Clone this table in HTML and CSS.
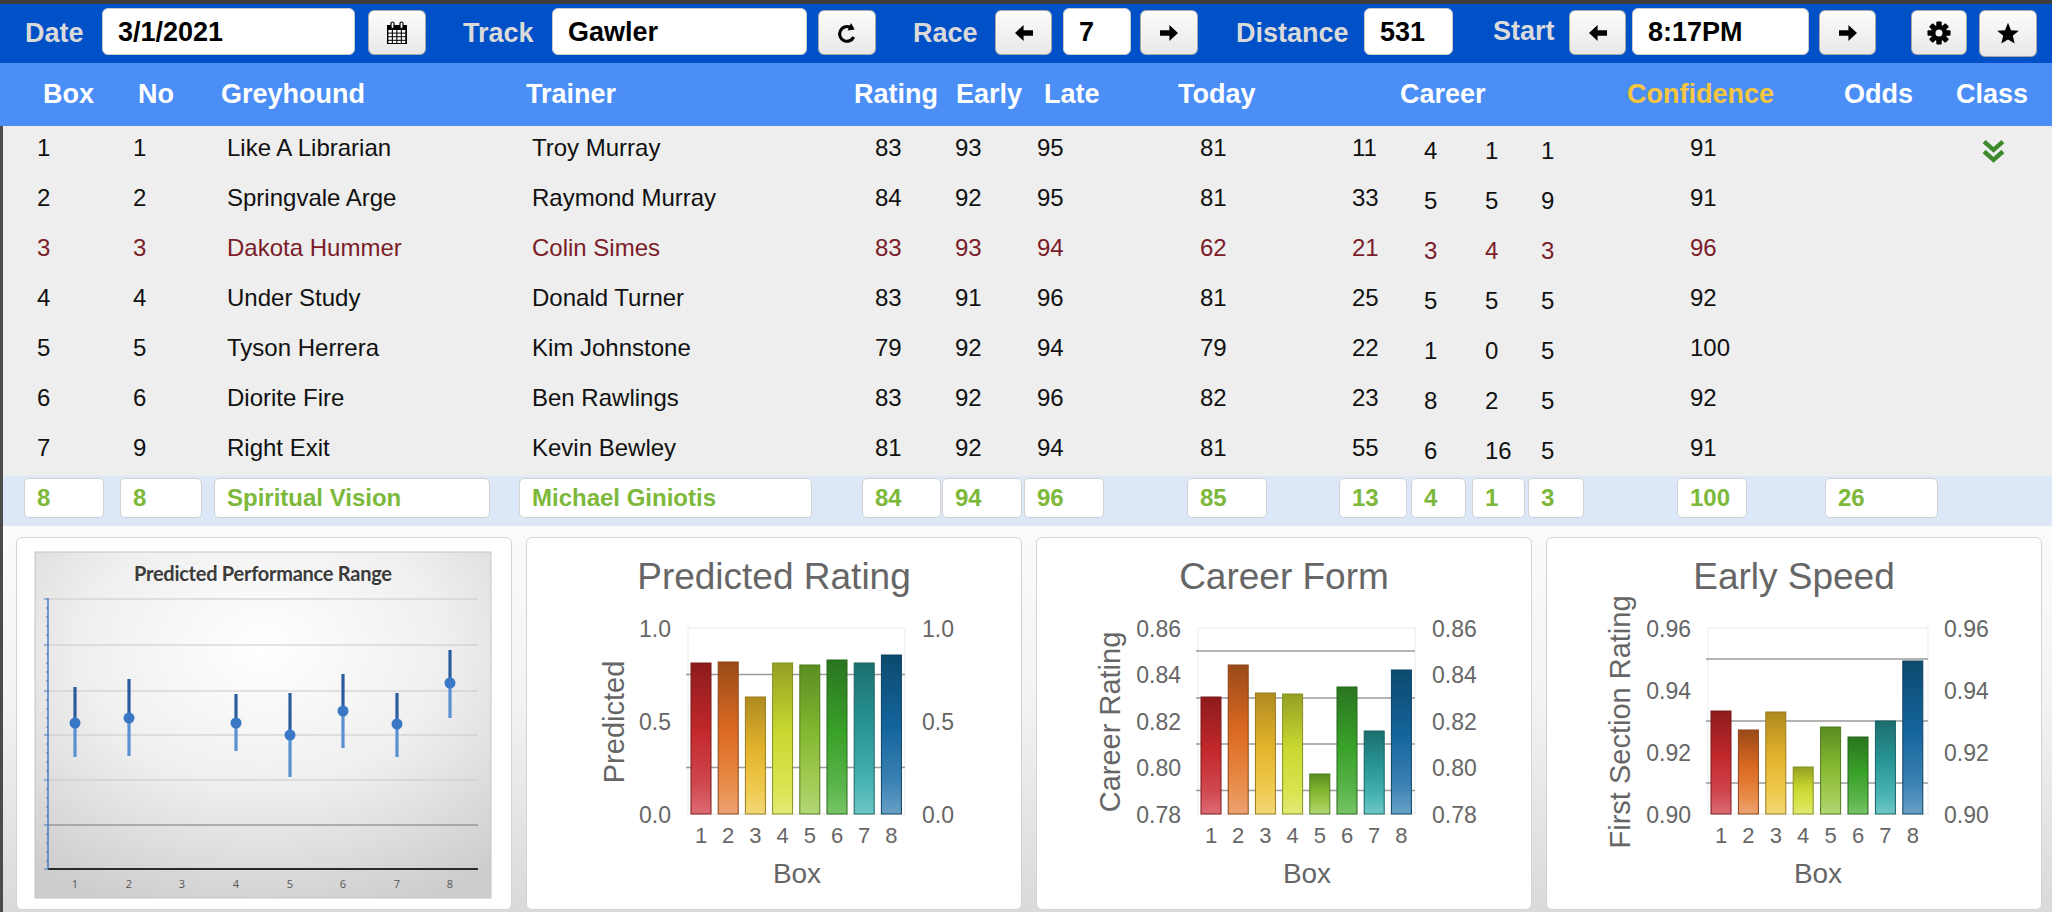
FILE: index.html
```html
<!DOCTYPE html>
<html>
<head>
<meta charset="utf-8">
<title>Race</title>
<link rel="stylesheet" href="styles.css">
</head>
<body>
<div class="app">
  <div class="toolbar">
    <div class="tb-label lb-date">Date</div>
    <div class="tb-input in-date">3/1/2021</div>
    <div class="tb-btn bt-cal">
      <svg width="22" height="24" viewBox="0 0 22 24">
        <rect x="1" y="4" width="20" height="19" fill="#000"/>
        <g fill="#fff">
          <rect x="2.4" y="9" width="3.4" height="2.6"/><rect x="6.9" y="9" width="3.4" height="2.6"/><rect x="11.4" y="9" width="3.4" height="2.6"/><rect x="15.9" y="9" width="3.4" height="2.6"/>
          <rect x="2.4" y="12.6" width="3.4" height="2.6"/><rect x="6.9" y="12.6" width="3.4" height="2.6"/><rect x="11.4" y="12.6" width="3.4" height="2.6"/><rect x="15.9" y="12.6" width="3.4" height="2.6"/>
          <rect x="2.4" y="16.2" width="3.4" height="2.6"/><rect x="6.9" y="16.2" width="3.4" height="2.6"/><rect x="11.4" y="16.2" width="3.4" height="2.6"/><rect x="15.9" y="16.2" width="3.4" height="2.6"/>
          <rect x="2.4" y="19.8" width="3.4" height="2.2"/><rect x="6.9" y="19.8" width="3.4" height="2.2"/><rect x="11.4" y="19.8" width="3.4" height="2.2"/><rect x="15.9" y="19.8" width="3.4" height="2.2"/>
        </g>
        <rect x="5" y="1" width="3" height="6.5" rx="1.5" fill="#fff" stroke="#000" stroke-width="1.2"/>
        <rect x="14" y="1" width="3" height="6.5" rx="1.5" fill="#fff" stroke="#000" stroke-width="1.2"/>
      </svg>
    </div>
    <div class="tb-label lb-track">Track</div>
    <div class="tb-input in-track">Gawler</div>
    <div class="tb-btn bt-refresh">
      <svg width="22" height="24" viewBox="0 0 24 24">
        <path d="M19.25 16.4 A8 8 0 1 1 15.4 5.75" fill="none" stroke="#000" stroke-width="3.4"/>
        <polygon points="16.4,1.2 20.4,8.1 12.6,9.4" fill="#000"/>
      </svg>
    </div>
    <div class="tb-label lb-race">Race</div>
    <div class="tb-btn bt-arrow">
      <svg width="20" height="20" viewBox="0 0 20 20"><path d="M19 7.3H9.6V2L1 10l8.6 8v-5.3H19z" fill="#000"/></svg>
    </div>
    <div class="tb-input in-race">7</div>
    <div class="tb-btn bt-arrow bt-race-next">
      <svg width="20" height="20" viewBox="0 0 20 20"><path d="M1 7.3h9.4V2l8.6 8-8.6 8v-5.3H1z" fill="#000"/></svg>
    </div>
    <div class="tb-label lb-dist">Distance</div>
    <div class="tb-input in-dist">531</div>
    <div class="tb-label lb-start">Start</div>
    <div class="tb-btn bt-arrow">
      <svg width="20" height="20" viewBox="0 0 20 20"><path d="M19 7.3H9.6V2L1 10l8.6 8v-5.3H19z" fill="#000"/></svg>
    </div>
    <div class="tb-input in-time">8:17PM</div>
    <div class="tb-btn bt-arrow bt-time-next">
      <svg width="20" height="20" viewBox="0 0 20 20"><path d="M1 7.3h9.4V2l8.6 8-8.6 8v-5.3H1z" fill="#000"/></svg>
    </div>
    <div class="tb-btn bt-gear">
      <svg width="24" height="24" viewBox="-12 -12 24 24">
        <g fill="#000">
          <circle r="8"/>
          <rect x="-2.7" y="-11.5" width="5.4" height="23" rx="1"/>
          <rect x="-2.7" y="-11.5" width="5.4" height="23" rx="1" transform="rotate(45)"/>
          <rect x="-2.7" y="-11.5" width="5.4" height="23" rx="1" transform="rotate(90)"/>
          <rect x="-2.7" y="-11.5" width="5.4" height="23" rx="1" transform="rotate(135)"/>
        </g>
        <circle r="3.5" fill="#f2f2f2"/>
      </svg>
    </div>
    <div class="tb-btn bt-star">
      <svg width="24" height="23" viewBox="0 0 24 23">
        <polygon points="12,0.8 15,8.2 22.8,8.8 16.8,13.8 18.7,21.6 12,17.4 5.3,21.6 7.2,13.8 1.2,8.8 9,8.2" fill="#000"/>
      </svg>
    </div>
  </div>

  <div class="thead">
    <div>Box</div><div>No</div><div>Greyhound</div><div>Trainer</div><div>Rating</div><div>Early</div><div>Late</div><div>Today</div><div>Career</div><div class="conf">Confidence</div><div>Odds</div><div>Class</div>
  </div>

  <div class="main">
    <div class="row">
      <div class="cell">1</div><div class="cell">1</div><div class="cell">Like A Librarian</div><div class="cell">Troy Murray</div><div class="cell">83</div><div class="cell">93</div><div class="cell">95</div><div class="cell">81</div><div class="cell">11</div><div class="cell sub">4</div><div class="cell sub">1</div><div class="cell sub">1</div><div class="cell">91</div><div class="cell"></div>
      <div class="cls"><svg width="25" height="25" viewBox="0 0 24 24"><polyline points="3,2.5 12,10.5 21,2.5" fill="none" stroke="#3c8a2c" stroke-width="4.2"/><polyline points="3,12 12,20 21,12" fill="none" stroke="#3c8a2c" stroke-width="4.2"/></svg></div>
    </div>
    <div class="row">
      <div class="cell">2</div><div class="cell">2</div><div class="cell">Springvale Arge</div><div class="cell">Raymond Murray</div><div class="cell">84</div><div class="cell">92</div><div class="cell">95</div><div class="cell">81</div><div class="cell">33</div><div class="cell sub">5</div><div class="cell sub">5</div><div class="cell sub">9</div><div class="cell">91</div><div class="cell"></div><div class="cls"></div>
    </div>
    <div class="row red">
      <div class="cell">3</div><div class="cell">3</div><div class="cell">Dakota Hummer</div><div class="cell">Colin Simes</div><div class="cell">83</div><div class="cell">93</div><div class="cell">94</div><div class="cell">62</div><div class="cell">21</div><div class="cell sub">3</div><div class="cell sub">4</div><div class="cell sub">3</div><div class="cell">96</div><div class="cell"></div><div class="cls"></div>
    </div>
    <div class="row">
      <div class="cell">4</div><div class="cell">4</div><div class="cell">Under Study</div><div class="cell">Donald Turner</div><div class="cell">83</div><div class="cell">91</div><div class="cell">96</div><div class="cell">81</div><div class="cell">25</div><div class="cell sub">5</div><div class="cell sub">5</div><div class="cell sub">5</div><div class="cell">92</div><div class="cell"></div><div class="cls"></div>
    </div>
    <div class="row">
      <div class="cell">5</div><div class="cell">5</div><div class="cell">Tyson Herrera</div><div class="cell">Kim Johnstone</div><div class="cell">79</div><div class="cell">92</div><div class="cell">94</div><div class="cell">79</div><div class="cell">22</div><div class="cell sub">1</div><div class="cell sub">0</div><div class="cell sub">5</div><div class="cell">100</div><div class="cell"></div><div class="cls"></div>
    </div>
    <div class="row">
      <div class="cell">6</div><div class="cell">6</div><div class="cell">Diorite Fire</div><div class="cell">Ben Rawlings</div><div class="cell">83</div><div class="cell">92</div><div class="cell">96</div><div class="cell">82</div><div class="cell">23</div><div class="cell sub">8</div><div class="cell sub">2</div><div class="cell sub">5</div><div class="cell">92</div><div class="cell"></div><div class="cls"></div>
    </div>
    <div class="row">
      <div class="cell">7</div><div class="cell">9</div><div class="cell">Right Exit</div><div class="cell">Kevin Bewley</div><div class="cell">81</div><div class="cell">92</div><div class="cell">94</div><div class="cell">81</div><div class="cell">55</div><div class="cell sub">6</div><div class="cell sub">16</div><div class="cell sub">5</div><div class="cell">91</div><div class="cell"></div><div class="cls"></div>
    </div>
    <div class="row edit">
      <div><div class="in w80">8</div></div>
      <div><div class="in w82">8</div></div>
      <div><div class="in w276">Spiritual Vision</div></div>
      <div><div class="in w293">Michael Giniotis</div></div>
      <div><div class="in w79">84</div></div>
      <div><div class="in w80">94</div></div>
      <div><div class="in w80">96</div></div>
      <div><div class="in w80">85</div></div>
      <div><div class="in w68">13</div></div>
      <div><div class="in w55">4</div></div>
      <div><div class="in w53">1</div></div>
      <div><div class="in w56">3</div></div>
      <div><div class="in w70">100</div></div>
      <div><div class="in w113">26</div></div>
      <div></div>
    </div>

    <div class="charts">
      <div class="card">
        <svg class="chart" width="494" height="371" viewBox="0 0 494 371">
          <defs>
            <radialGradient id="pf" cx="0.5" cy="0.28" r="0.8">
              <stop offset="0" stop-color="#ffffff"/>
              <stop offset="0.5" stop-color="#efefef"/>
              <stop offset="1" stop-color="#cdcdcd"/>
            </radialGradient>
          </defs>
          <rect x="18" y="14" width="456" height="346" fill="url(#pf)" stroke="#c4c4c4"/>
          <text class="ptitle" x="246" y="43" text-anchor="middle" textLength="258">Predicted Performance Range</text>
          <g stroke="#c8c8c8" stroke-width="1">
            <line x1="31" x2="461" y1="61" y2="61"/>
            <line x1="31" x2="461" y1="107" y2="107"/>
            <line x1="31" x2="461" y1="153" y2="153"/>
            <line x1="31" x2="461" y1="197" y2="197"/>
            <line x1="31" x2="461" y1="242" y2="242"/>
          </g>
          <line x1="31" x2="461" y1="287" y2="287" stroke="#777" stroke-width="1.2"/>
          <line x1="31" x2="461" y1="331" y2="331" stroke="#2a2a2a" stroke-width="2"/>
          <line x1="31" x2="31" y1="60" y2="331" stroke="#4a78c0" stroke-width="1.5"/>
          <path d="M27 61h4M27 107h4M27 153h4M27 197h4M27 242h4M27 287h4M27 331h4M29 70h2M29 79h2M29 88h2M29 97h2M29 116h2M29 125h2M29 134h2M29 143h2M29 162h2M29 171h2M29 180h2M29 189h2M29 206h2M29 215h2M29 224h2M29 233h2M29 251h2M29 260h2M29 269h2M29 278h2M29 296h2M29 305h2M29 314h2M29 323h2" stroke="#4a78c0" stroke-width="1"/>
          <g class="plab" text-anchor="middle">
            <text x="58" y="350">1</text><text x="112" y="350">2</text><text x="165" y="350">3</text><text x="219" y="350">4</text><text x="273" y="350">5</text><text x="326" y="350">6</text><text x="380" y="350">7</text><text x="433" y="350">8</text>
          </g>
          <g stroke-width="3.2">
            <line x1="58" x2="58" y1="149" y2="185" stroke="#2b5c9e"/><line x1="58" x2="58" y1="185" y2="219" stroke="#5a8fd0"/>
            <line x1="112" x2="112" y1="141" y2="180" stroke="#2b5c9e"/><line x1="112" x2="112" y1="180" y2="218" stroke="#5a8fd0"/>
            <line x1="219" x2="219" y1="156" y2="185" stroke="#2b5c9e"/><line x1="219" x2="219" y1="185" y2="213" stroke="#5a8fd0"/>
            <line x1="273" x2="273" y1="155" y2="197" stroke="#2b5c9e"/><line x1="273" x2="273" y1="197" y2="239" stroke="#5a8fd0"/>
            <line x1="326" x2="326" y1="136" y2="173" stroke="#2b5c9e"/><line x1="326" x2="326" y1="173" y2="210" stroke="#5a8fd0"/>
            <line x1="380" x2="380" y1="155" y2="186" stroke="#2b5c9e"/><line x1="380" x2="380" y1="186" y2="219" stroke="#5a8fd0"/>
            <line x1="433" x2="433" y1="112" y2="145" stroke="#2b5c9e"/><line x1="433" x2="433" y1="145" y2="180" stroke="#5a8fd0"/>
          </g>
          <g fill="#3a78c6">
            <circle cx="58" cy="185" r="5.5"/><circle cx="112" cy="180" r="5.5"/><circle cx="219" cy="185" r="5.5"/><circle cx="273" cy="197" r="5.5"/><circle cx="326" cy="173" r="5.5"/><circle cx="380" cy="186" r="5.5"/><circle cx="433" cy="145" r="5.5"/>
          </g>
        </svg>
      </div>

      <div class="card">
        <svg class="chart" width="494" height="371" viewBox="0 0 494 371">
          <defs>
            <linearGradient id="g1" x1="0" y1="0" x2="0" y2="1"><stop offset="0" stop-color="#8c1b1c"/><stop offset="0.45" stop-color="#c2282b"/><stop offset="0.8" stop-color="#d04850"/><stop offset="1" stop-color="#dc6b74"/></linearGradient>
            <linearGradient id="g2" x1="0" y1="0" x2="0" y2="1"><stop offset="0" stop-color="#9a4a18"/><stop offset="0.45" stop-color="#dc6a22"/><stop offset="0.8" stop-color="#e88c48"/><stop offset="1" stop-color="#eca272"/></linearGradient>
            <linearGradient id="g3" x1="0" y1="0" x2="0" y2="1"><stop offset="0" stop-color="#b08a20"/><stop offset="0.45" stop-color="#e2b42c"/><stop offset="0.8" stop-color="#f0ca50"/><stop offset="1" stop-color="#f2d878"/></linearGradient>
            <linearGradient id="g4" x1="0" y1="0" x2="0" y2="1"><stop offset="0" stop-color="#94a024"/><stop offset="0.45" stop-color="#c8d830"/><stop offset="0.8" stop-color="#d8e44e"/><stop offset="1" stop-color="#e2ea76"/></linearGradient>
            <linearGradient id="g5" x1="0" y1="0" x2="0" y2="1"><stop offset="0" stop-color="#5a8c22"/><stop offset="0.45" stop-color="#84b830"/><stop offset="0.8" stop-color="#a2cc56"/><stop offset="1" stop-color="#b4d676"/></linearGradient>
            <linearGradient id="g6" x1="0" y1="0" x2="0" y2="1"><stop offset="0" stop-color="#2a7420"/><stop offset="0.45" stop-color="#38a028"/><stop offset="0.8" stop-color="#58b448"/><stop offset="1" stop-color="#78c468"/></linearGradient>
            <linearGradient id="g7" x1="0" y1="0" x2="0" y2="1"><stop offset="0" stop-color="#1c6e6e"/><stop offset="0.45" stop-color="#2a9898"/><stop offset="0.8" stop-color="#4ab4b4"/><stop offset="1" stop-color="#70c6c6"/></linearGradient>
            <linearGradient id="g8" x1="0" y1="0" x2="0" y2="1"><stop offset="0" stop-color="#0c4a6e"/><stop offset="0.45" stop-color="#14649c"/><stop offset="0.8" stop-color="#3c82b4"/><stop offset="1" stop-color="#68a0c4"/></linearGradient>
          </defs>
          <text class="ctitle" x="247" y="51" text-anchor="middle">Predicted Rating</text>
          <rect x="161" y="90" width="217" height="186" fill="#fff" stroke="#ebebeb"/>
          <g class="gl"><line x1="159" x2="378" y1="136.5" y2="136.5"/><line x1="159" x2="378" y1="229.5" y2="229.5"/></g>
          <rect class="b1" x="164" y="125" width="20" height="151"/>
          <rect class="b2" x="191.2" y="124" width="20" height="152"/>
          <rect class="b3" x="218.4" y="159" width="20" height="117"/>
          <rect class="b4" x="245.6" y="125" width="20" height="151"/>
          <rect class="b5" x="272.8" y="127" width="20" height="149"/>
          <rect class="b6" x="300" y="122" width="20" height="154"/>
          <rect class="b7" x="327.2" y="125" width="20" height="151"/>
          <rect class="b8" x="354.4" y="117" width="20" height="159"/>
          <g class="tick" text-anchor="end"><text x="144" y="99">1.0</text><text x="144" y="192">0.5</text><text x="144" y="285">0.0</text></g>
          <g class="tick"><text x="395" y="99">1.0</text><text x="395" y="192">0.5</text><text x="395" y="285">0.0</text></g>
          <g class="xl" text-anchor="middle"><text x="174" y="305">1</text><text x="201.2" y="305">2</text><text x="228.4" y="305">3</text><text x="255.6" y="305">4</text><text x="282.8" y="305">5</text><text x="310" y="305">6</text><text x="337.2" y="305">7</text><text x="364.4" y="305">8</text></g>
          <text class="axb" x="270" y="345" text-anchor="middle">Box</text>
          <text class="axt" transform="translate(97,184) rotate(-90)" text-anchor="middle">Predicted</text>
        </svg>
      </div>

      <div class="card">
        <svg class="chart" width="494" height="371" viewBox="0 0 494 371">
          <text class="ctitle" x="247" y="51" text-anchor="middle">Career Form</text>
          <rect x="161" y="90" width="217" height="186" fill="#fff" stroke="#ebebeb"/>
          <g class="gl"><line x1="159" x2="378" y1="113" y2="113"/><line x1="159" x2="378" y1="160" y2="160"/><line x1="159" x2="378" y1="206" y2="206"/><line x1="159" x2="378" y1="252.5" y2="252.5"/></g>
          <rect class="b1" x="164" y="159" width="20" height="117"/>
          <rect class="b2" x="191.2" y="127" width="20" height="149"/>
          <rect class="b3" x="218.4" y="155" width="20" height="121"/>
          <rect class="b4" x="245.6" y="156" width="20" height="120"/>
          <rect class="b5" x="272.8" y="236" width="20" height="40"/>
          <rect class="b6" x="300" y="149" width="20" height="127"/>
          <rect class="b7" x="327.2" y="193" width="20" height="83"/>
          <rect class="b8" x="354.4" y="132" width="20" height="144"/>
          <g class="tick" text-anchor="end"><text x="144" y="99">0.86</text><text x="144" y="145">0.84</text><text x="144" y="192">0.82</text><text x="144" y="238">0.80</text><text x="144" y="285">0.78</text></g>
          <g class="tick"><text x="395" y="99">0.86</text><text x="395" y="145">0.84</text><text x="395" y="192">0.82</text><text x="395" y="238">0.80</text><text x="395" y="285">0.78</text></g>
          <g class="xl" text-anchor="middle"><text x="174" y="305">1</text><text x="201.2" y="305">2</text><text x="228.4" y="305">3</text><text x="255.6" y="305">4</text><text x="282.8" y="305">5</text><text x="310" y="305">6</text><text x="337.2" y="305">7</text><text x="364.4" y="305">8</text></g>
          <text class="axb" x="270" y="345" text-anchor="middle">Box</text>
          <text class="axt" transform="translate(83,184) rotate(-90)" text-anchor="middle">Career Rating</text>
        </svg>
      </div>

      <div class="card">
        <svg class="chart" width="494" height="371" viewBox="0 0 494 371">
          <text class="ctitle" x="247" y="51" text-anchor="middle">Early Speed</text>
          <rect x="161" y="90" width="220" height="186" fill="#fff" stroke="#ebebeb"/>
          <g class="gl"><line x1="159" x2="381" y1="121" y2="121"/><line x1="159" x2="381" y1="183" y2="183"/><line x1="159" x2="381" y1="245" y2="245"/></g>
          <rect class="b1" x="164" y="173" width="20" height="103"/>
          <rect class="b2" x="191.4" y="192" width="20" height="84"/>
          <rect class="b3" x="218.8" y="174" width="20" height="102"/>
          <rect class="b4" x="246.2" y="229" width="20" height="47"/>
          <rect class="b5" x="273.6" y="189" width="20" height="87"/>
          <rect class="b6" x="301" y="199" width="20" height="77"/>
          <rect class="b7" x="328.4" y="183" width="20" height="93"/>
          <rect class="b8" x="355.8" y="123" width="20" height="153"/>
          <g class="tick" text-anchor="end"><text x="144" y="99">0.96</text><text x="144" y="161">0.94</text><text x="144" y="223">0.92</text><text x="144" y="285">0.90</text></g>
          <g class="tick"><text x="397" y="99">0.96</text><text x="397" y="161">0.94</text><text x="397" y="223">0.92</text><text x="397" y="285">0.90</text></g>
          <g class="xl" text-anchor="middle"><text x="174" y="305">1</text><text x="201.4" y="305">2</text><text x="228.8" y="305">3</text><text x="256.2" y="305">4</text><text x="283.6" y="305">5</text><text x="311" y="305">6</text><text x="338.4" y="305">7</text><text x="365.8" y="305">8</text></g>
          <text class="axb" x="271" y="345" text-anchor="middle">Box</text>
          <text class="axt" transform="translate(83,184) rotate(-90)" text-anchor="middle">First Section Rating</text>
        </svg>
      </div>
    </div>
  </div>
</div>
</body>
</html>
```

FILE: styles.css
```css
* { box-sizing: border-box; }
html, body { margin: 0; padding: 0; }
body {
  width: 2052px;
  height: 912px;
  overflow: hidden;
  background: #ffffff;
  font-family: "Liberation Sans", Arial, sans-serif;
}
.app { border-top: 4px solid #3d3d3d; }

/* toolbar */
.toolbar {
  display: flex;
  align-items: flex-start;
  height: 59px;
  padding-top: 4px;
  background: #0050c8;
}
.tb-label {
  color: #dadada;
  font-weight: bold;
  font-size: 27px;
  line-height: 47px;
  padding-top: 2px;
  white-space: nowrap;
}
.tb-input {
  height: 47px;
  background: #ffffff;
  border: 1px solid #c9c9c9;
  border-radius: 6px;
  padding: 3px 0 0 15px;
  font-weight: bold;
  font-size: 27px;
  line-height: 41px;
  color: #000;
  white-space: nowrap;
}
.tb-btn {
  height: 45px;
  margin-top: 2px;
  width: 57px;
  border: 1px solid #a8a8a8;
  border-radius: 6px;
  background: linear-gradient(#fcfcfc, #e8e8e8);
  display: flex;
  align-items: center;
  justify-content: center;
}
.tb-btn svg { display: block; }
.lb-date { margin-left: 25px; width: 77px; }
.in-date { width: 253px; }
.bt-cal { margin-left: 13px; width: 58px; }
.lb-track { margin-left: 37px; width: 89px; }
.in-track { width: 255px; }
.bt-refresh { margin-left: 11px; width: 58px; }
.lb-race { margin-left: 37px; width: 82px; }
.in-race { margin-left: 11px; width: 68px; }
.bt-race-next { margin-left: 9px; width: 58px; }
.lb-dist { margin-left: 38px; width: 128px; }
.in-dist { width: 89px; }
.lb-start { margin-left: 40px; width: 76px; padding-top: 0; }
.in-time { margin-left: 6px; width: 177px; }
.bt-time-next { margin-left: 10px; }
.bt-gear { margin-left: 35px; width: 56px; }
.bt-star { margin-left: 12px; width: 58px; height: 47px; }

/* table header */
.thead {
  display: grid;
  grid-template-columns: 95px 83px 305px 328px 102px 88px 134px 222px 227px 217px 112px 1fr;
  height: 63px;
  padding-left: 43px;
  background: #4a8ef6;
  color: #ffffff;
  font-weight: bold;
  font-size: 27px;
  line-height: 62px;
  white-space: nowrap;
}
.thead .conf { color: #f7c641; }

/* body */
.main { border-left: 3px solid #4b4b4b; }
.row {
  display: grid;
  grid-template-columns: 96px 94px 305px 343px 80px 82px 163px 152px 72px 61px 56px 149px 148px 135px 1fr;
  padding-left: 21px;
  height: 50px;
  background: #eeeeee;
  color: #111111;
  font-size: 24px;
}
.row.red { color: #7b1c28; }
.cell {
  padding-left: 13px;
  line-height: 44px;
  white-space: nowrap;
}
.cell.sub { padding-top: 3px; }
.cls {
  display: flex;
  align-items: center;
  height: 50px;
  padding-left: 21px;
}
.row.edit {
  background: #dce8f8;
  padding-top: 2px;
}
.in {
  height: 40px;
  background: #ffffff;
  border: 1px solid #d2d2d2;
  border-radius: 5px;
  padding-left: 12px;
  color: #7cb83a;
  font-weight: bold;
  font-size: 24px;
  line-height: 38px;
  white-space: nowrap;
  overflow: hidden;
}
.w53 { width: 53px; }
.w55 { width: 55px; }
.w56 { width: 56px; }
.w68 { width: 68px; }
.w70 { width: 70px; }
.w79 { width: 79px; }
.w80 { width: 80px; }
.w82 { width: 82px; }
.w113 { width: 113px; }
.w276 { width: 276px; }
.w293 { width: 293px; }

/* charts */
.charts {
  display: grid;
  grid-template-columns: repeat(4, 1fr);
  gap: 14px;
  height: 386px;
  padding: 11px 10px 2px 13px;
  background: linear-gradient(#fbfbfb 0%, #f3f3f3 45%, #d9d9d9 100%);
}
.card {
  height: 373px;
  background: #ffffff;
  border: 1px solid #d4d4d4;
  border-radius: 6px;
  overflow: hidden;
}
.chart { display: block; }
.chart text { font-family: "Liberation Sans", Arial, sans-serif; }
.chart .ctitle { font-size: 37px; fill: #666666; }
.chart .tick text { font-size: 23px; fill: #666666; }
.chart .xl text { font-size: 22px; fill: #666666; }
.chart .axb { font-size: 28px; fill: #666666; }
.chart .axt { font-size: 29px; fill: #666666; }
.chart .ptitle { font-family: Lato, "Open Sans", sans-serif; font-weight: bold; font-size: 20px; fill: #3b3b3b; }
.chart .plab text { font-family: "Open Sans", sans-serif; font-size: 11px; fill: #555555; }
.gl line { stroke: #9a9a9a; stroke-width: 1.6; }
.b1 { fill: url(#g1); stroke: #7a1818; }
.b2 { fill: url(#g2); stroke: #8a4418; }
.b3 { fill: url(#g3); stroke: #9a7a1c; }
.b4 { fill: url(#g4); stroke: #86901e; }
.b5 { fill: url(#g5); stroke: #4e7c1e; }
.b6 { fill: url(#g6); stroke: #24661c; }
.b7 { fill: url(#g7); stroke: #186262; }
.b8 { fill: url(#g8); stroke: #0a4264; }
```
